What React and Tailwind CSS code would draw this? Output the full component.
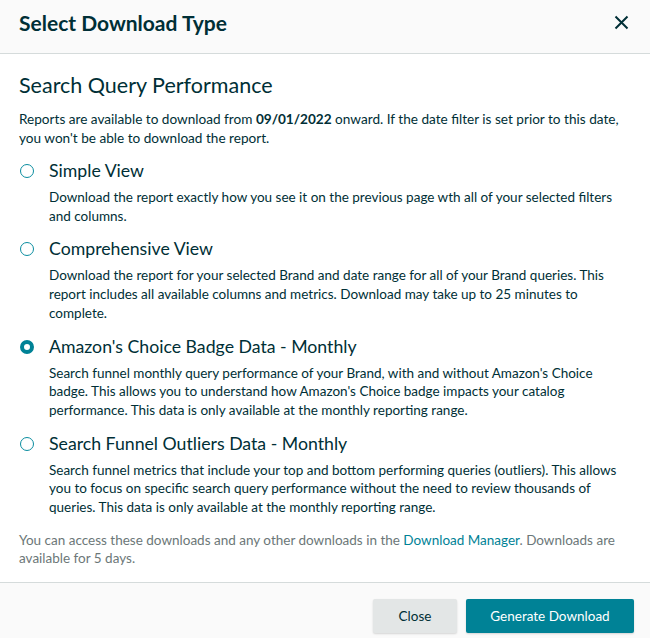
import React from 'react'

const options = [
  {
    label: 'Simple View',
    desc: 'Download the report exactly how you see it on the previous page wth all of your selected filters and columns.',
  },
  {
    label: 'Comprehensive View',
    desc: 'Download the report for your selected Brand and date range for all of your Brand queries. This report includes all available columns and metrics. Download may take up to 25 minutes to complete.',
  },
  {
    label: "Amazon's Choice Badge Data - Monthly",
    desc: "Search funnel monthly query performance of your Brand, with and without Amazon's Choice badge. This allows you to understand how Amazon's Choice badge impacts your catalog performance. This data is only available at the monthly reporting range.",
    checked: true,
  },
  {
    label: 'Search Funnel Outliers Data - Monthly',
    desc: 'Search funnel metrics that include your top and bottom performing queries (outliers). This allows you to focus on specific search query performance without the need to review thousands of queries. This data is only available at the monthly reporting range.',
  },
]

function Radio({ checked }) {
  return checked ? (
    <span className="block w-[14px] h-[14px] rounded-full border-[4px] border-[#008296] bg-white shrink-0" />
  ) : (
    <span className="block w-[14px] h-[14px] rounded-full border-[1.5px] border-[#0a8da0] bg-white shrink-0" />
  )
}

export default function App() {
  return (
    <div
      className="w-[650px] h-[638px] bg-white flex flex-col text-[#002f36]"
      style={{ fontFamily: '"Lato", "Liberation Sans", sans-serif' }}
    >
      <div className="h-[54px] shrink-0 bg-[#fafafa] border-b border-[#d5dbdb] flex items-center justify-between pl-[19px] pr-[21px] pb-[8px]">
        <h1 className="text-[21px] font-bold leading-none">Select Download Type</h1>
        <svg width="15" height="15" viewBox="0 0 15 15" fill="none" stroke="#002f36" strokeWidth="2">
          <path d="M1.5 1.5 L13.5 13.5 M13.5 1.5 L1.5 13.5" />
        </svg>
      </div>

      <div className="flex-1 px-[19px] pt-[17px]">
        <h2 className="text-[21.5px] leading-[28px]">Search Query Performance</h2>
        <p className="mt-[11px] text-[13.6px] leading-[19px]">
          Reports are available to download from <b>09/01/2022</b> onward. If the date filter is set prior to this date, you won't be able to download the report.
        </p>

        <div className="mt-[11px] flex flex-col gap-[12px]">
          {options.map((o, i) => (
            <div key={i}>
              <div className="flex items-center h-[24px]">
                <div className="w-[30px] pl-[1px]">
                  <Radio checked={o.checked} />
                </div>
                <span className="text-[17.7px] leading-[24px]">{o.label}</span>
              </div>
              <p className="mt-[5px] pl-[30px] text-[13.5px] leading-[18.7px]">{o.desc}</p>
            </div>
          ))}
        </div>

        <p className="mt-[14px] text-[13.5px] leading-[18.5px] text-[#6c7778]">
          You can access these downloads and any other downloads in the{' '}
          <span className="text-[#008296]">Download Manager</span>. Downloads are available for 5 days.
        </p>
      </div>

      <div className="h-[56px] shrink-0 bg-[#fafafa] border-t border-[#d5dbdb] flex items-start justify-end gap-[9px] pr-[16px] pt-[16px]">
        <button className="w-[84px] h-[34px] bg-[#e3e6e6] rounded-[2px] text-[13.5px] text-[#002f36] shadow-[0_1px_2px_rgba(0,0,0,0.15)]">
          Close
        </button>
        <button className="w-[168px] h-[34px] bg-[#008296] rounded-[2px] text-[13.5px] text-white shadow-[0_1px_2px_rgba(0,0,0,0.15)]">
          Generate Download
        </button>
      </div>
    </div>
  )
}
